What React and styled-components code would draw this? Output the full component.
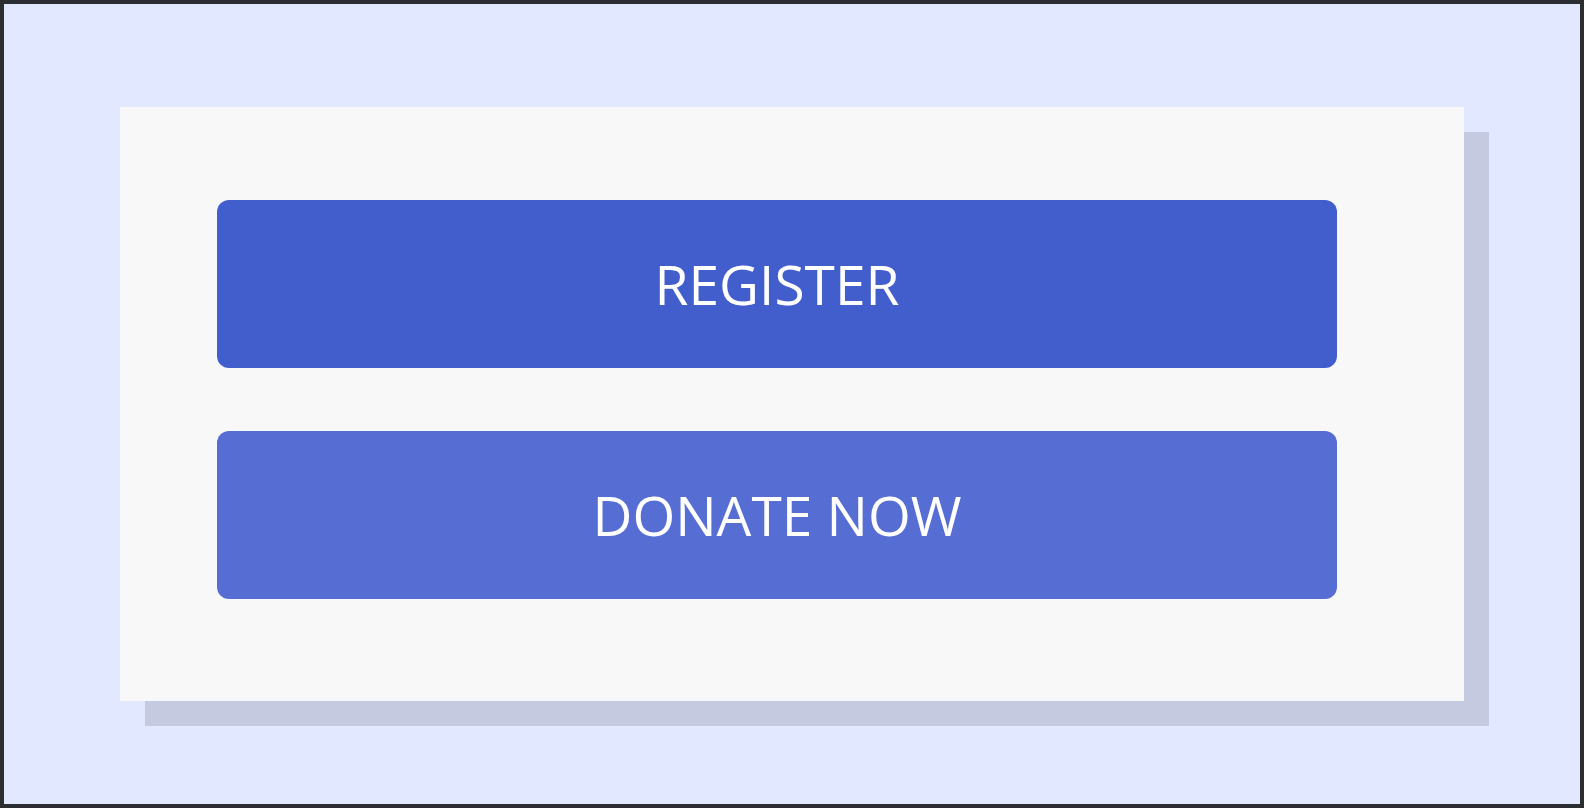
import React from 'react';
import styled, { createGlobalStyle } from 'styled-components';

const GlobalStyle = createGlobalStyle`
  * {
    box-sizing: border-box;
  }

  html,
  body {
    margin: 0;
    padding: 0;
    background: #2b2d31;
  }
`;

const Frame = styled.div`
  width: 1584px;
  height: 808px;
  border: 4px solid #2b2d31;
  background: #e2e8ff;
  padding: 103px 0 0 116px;
  font-family: 'Open Sans', 'Noto Sans', sans-serif;
`;

const Card = styled.div`
  width: 1344px;
  height: 594px;
  background: #f8f8f8;
  box-shadow: 25px 25px 0 #c5cae1;
  display: flex;
  flex-direction: column;
  gap: 63px;
  padding: 93px 127px 102px 97px;
`;

const ActionButton = styled.button`
  height: 168px;
  width: 100%;
  border: none;
  border-radius: 12px;
  background: ${(p) => (p.$variant === 'secondary' ? '#566ed4' : '#425ecd')};
  color: #ffffff;
  font-family: inherit;
  font-size: 55px;
  font-weight: 400;
  letter-spacing: 0;
  text-transform: uppercase;
  display: flex;
  align-items: center;
  justify-content: center;
  padding: 0 0 2px;
  cursor: pointer;
`;

const App = () => {
  return (
    <>
      <GlobalStyle />
      <Frame>
        <Card>
          <ActionButton>Register</ActionButton>
          <ActionButton $variant="secondary">Donate Now</ActionButton>
        </Card>
      </Frame>
    </>
  );
};

export default App;
